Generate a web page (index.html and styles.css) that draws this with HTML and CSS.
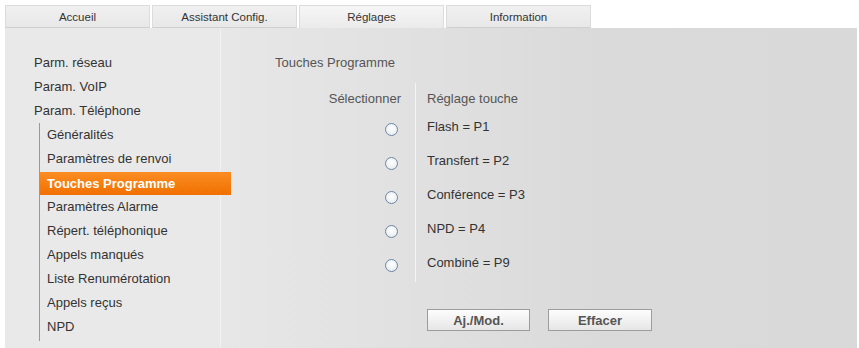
FILE: index.html
```html
<!DOCTYPE html>
<html lang="fr">
<head>
<meta charset="utf-8">
<title>Réglages</title>
<link rel="stylesheet" href="styles.css">
</head>
<body>
<div class="page">
  <div class="tabs">
    <div class="tab">Accueil</div>
    <div class="tab">Assistant Config.</div>
    <div class="tab active">Réglages</div>
    <div class="tab">Information</div>
  </div>
  <div class="main">
    <nav class="nav">
      <div class="item">Parm. réseau</div>
      <div class="item">Param. VoIP</div>
      <div class="item">Param. Téléphone</div>
      <div class="sub">
        <div class="sitem">Généralités</div>
        <div class="sitem">Paramètres de renvoi</div>
        <div class="sitem current">Touches Programme</div>
        <div class="sitem">Paramètres Alarme</div>
        <div class="sitem">Répert. téléphonique</div>
        <div class="sitem">Appels manqués</div>
        <div class="sitem">Liste Renumérotation</div>
        <div class="sitem">Appels reçus</div>
        <div class="sitem">NPD</div>
      </div>
    </nav>
    <section class="content">
      <div class="title">Touches Programme</div>
      <div class="grid">
        <div class="c1 head">Sélectionner</div>
        <div class="c2 head">Réglage touche</div>
        <div class="c1"><span class="radio"></span></div>
        <div class="c2">Flash = P1</div>
        <div class="c1"><span class="radio"></span></div>
        <div class="c2">Transfert = P2</div>
        <div class="c1"><span class="radio"></span></div>
        <div class="c2">Conférence = P3</div>
        <div class="c1"><span class="radio"></span></div>
        <div class="c2">NPD = P4</div>
        <div class="c1"><span class="radio"></span></div>
        <div class="c2 last">Combiné = P9</div>
      </div>
      <div class="buttons">
        <button class="btn b1">Aj./Mod.</button>
        <button class="btn b2">Effacer</button>
      </div>
    </section>
  </div>
</div>
</body>
</html>
```
FILE: styles.css
```css
html, body {
  margin: 0;
  padding: 0;
  background: #ffffff;
  font-family: "Liberation Sans", Arial, sans-serif;
  color: #333333;
}
.page {
  padding: 5px 2px 0 5px;
  height: 343px;
  display: flex;
  flex-direction: column;
  overflow: hidden;
}
.tabs {
  display: flex;
  gap: 2px;
  height: 23px;
  flex: none;
}
.tab {
  width: 145px;
  box-sizing: border-box;
  background: linear-gradient(#f0f0f0, #e8e8e8);
  border: 1px solid #dcdcdc;
  border-bottom: 1px solid #cfcfcf;
  font-size: 11.5px;
  color: #333;
  text-align: center;
  line-height: 22px;
}
.tab.active {
  background: linear-gradient(#f6f6f6, #ebebeb);
  border-bottom: none;
  color: #333;
}
.main {
  flex: 1;
  display: flex;
  min-height: 0;
}
.nav {
  width: 215px;
  flex: none;
  background: #e9e9e9;
  padding-top: 23px;
  box-sizing: border-box;
  position: relative;
  z-index: 1;
  font-size: 13px;
}
.item {
  height: 24px;
  line-height: 24px;
  padding-left: 29px;
}
.sub {
  margin-left: 34px;
  width: 191px;
  border-left: 1px solid #9a9a9a;
  padding-bottom: 2px;
}
.sitem {
  height: 24px;
  line-height: 24px;
  padding-left: 7px;
}
.sitem.current {
  background: linear-gradient(#fb8d24, #f07000);
  color: #ffffff;
  font-weight: bold;
  height: 23px;
  line-height: 23px;
  margin-top: 1px;
}
.content {
  flex: 1;
  background: linear-gradient(to right, #e7e7e7 0, #dadada 380px, #d9d9d9 100%);
  border-left: 1px solid #f2f2f2;
  padding-left: 54px;
  padding-top: 23px;
  font-size: 13px;
}
.title {
  height: 24px;
  line-height: 24px;
  color: #555555;
}
.grid {
  display: grid;
  grid-template-columns: 140px 200px;
  grid-auto-rows: 34px;
  grid-template-rows: 32px;
  margin-top: 8px;
}
.c1 {
  text-align: right;
  padding-right: 17px;
  box-sizing: border-box;
}
.c2 {
  border-left: 1px solid #f4f4f4;
  padding-left: 11px;
  padding-top: 5px;
  line-height: 14px;
}
.c1.head {
  padding-right: 14px;
  line-height: 32px;
  color: #555;
}
.c2.head {
  line-height: 32px;
  padding-top: 0;
  color: #555;
}
.c2.last {
  margin-bottom: 3px;
}
.radio {
  display: inline-block;
  width: 13px;
  height: 13px;
  box-sizing: border-box;
  border: 1.5px solid #6d87a3;
  border-radius: 50%;
  background: radial-gradient(circle at 50% 40%, #ffffff, #e2e6ea);
  margin-top: 8px;
}
.buttons {
  display: flex;
  gap: 18px;
  margin-top: 24px;
  margin-left: 152px;
}
.btn {
  height: 22px;
  width: 103px;
  box-sizing: border-box;
  border: 1px solid #9c9c9c;
  background: linear-gradient(#fdfdfd, #e6e6e6);
  font-family: "Liberation Sans", Arial, sans-serif;
  font-size: 13px;
  font-weight: bold;
  color: #555555;
  padding: 0;
}
.btn.b2 {
  width: 104px;
}
```
